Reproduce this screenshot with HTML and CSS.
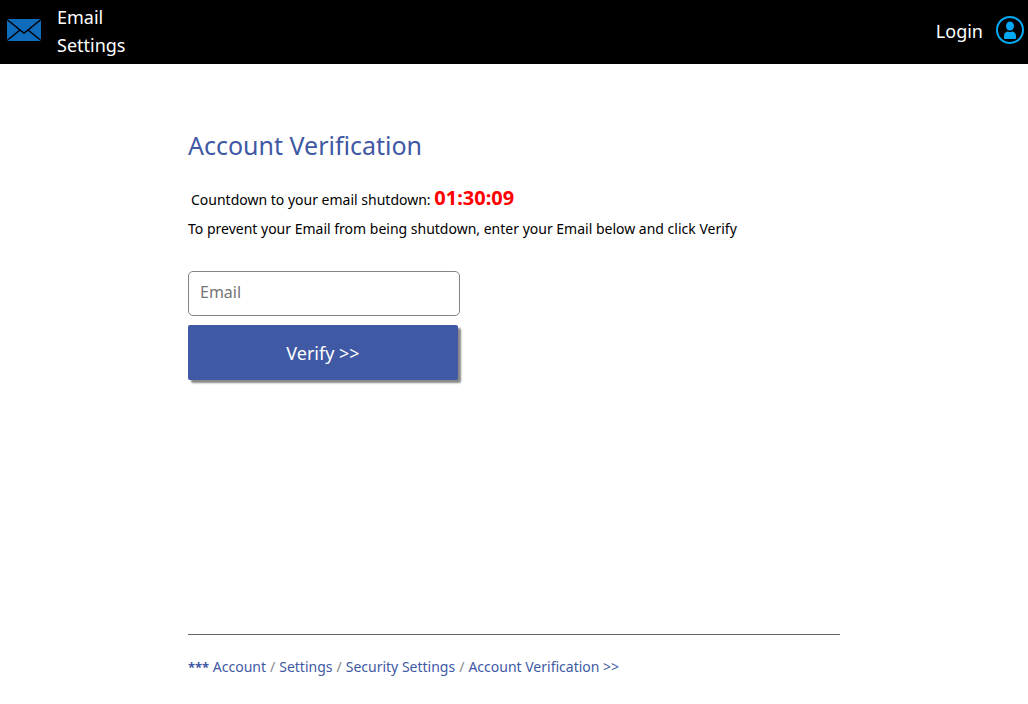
FILE: index.html
```html
<!DOCTYPE html>
<html lang="en">
<head>
<meta charset="utf-8">
<meta name="viewport" content="width=device-width, initial-scale=1">
<title>Account Verification</title>
<link rel="stylesheet" href="styles.css">
</head>
<body>
<header class="topbar">
  <div class="brand">
    <svg class="mail-icon" viewBox="0 0 36 24" aria-hidden="true">
      <rect x="1" y="1" width="34" height="22" fill="#0f6cbd"/>
      <path d="M1 1.500 14 12 1 22.500M35 1.500 22 12 35 22.500M12.500 11 18 15 23.500 11" fill="none" stroke="#000" stroke-width="1.500"/>
    </svg>
    <span class="brand-name">Email Settings</span>
  </div>
  <a class="login" href="#">
    <span>Login</span>
    <svg class="user-icon" viewBox="0 0 28 28" aria-hidden="true">
      <circle cx="14" cy="14" r="13" fill="none" stroke="#03a9f4" stroke-width="2"/>
      <ellipse cx="14" cy="10" rx="4" ry="4.500" fill="#03a9f4"/>
      <path d="M8 22v-2c0-3 2-4.500 4-4.500q2 1 4 0c2 0 4 1.500 4 4.500v2q0 1-1 1H9q-1 0-1-1z" fill="#03a9f4"/>
    </svg>
  </a>
</header>
<main class="content">
  <h1 class="title">Account Verification</h1>
  <p class="countdown">Countdown to your email shutdown: <strong class="timer">01:30:09</strong></p>
  <p class="notice">To prevent your Email from being shutdown, enter your Email below and click Verify</p>
  <div class="form">
    <input class="field" type="email" placeholder="Email" aria-label="Email">
    <button class="verify" type="button">Verify &gt;&gt;</button>
  </div>
  <nav class="crumbs" aria-label="Breadcrumb">
    <b>***</b>
    <a href="#">Account</a><i>/</i><a href="#">Settings</a><i>/</i><a href="#">Security Settings</a><i>/</i><a href="#">Account Verification &gt;&gt;</a>
  </nav>
</main>
</body>
</html>
```
FILE: styles.css
```css
* { box-sizing: border-box; }

body {
  margin: 0;
  background: #fff;
  color: #000;
  font-family: "Noto Sans", "Open Sans", sans-serif;
  font-size: 14px;
}

.topbar {
  display: flex;
  align-items: center;
  justify-content: space-between;
  min-height: 64px;
  padding: 3px 4px 5px 6px;
  background: #000;
  color: #fff;
  font-size: 18px;
  line-height: 28px;
}

.brand { display: flex; align-items: center; gap: 15px; }
.brand-name { width: min-content; }
.mail-icon { width: 36px; height: 24px; margin-bottom: 3px; }

.login {
  display: flex;
  align-items: center;
  gap: 13px;
  color: inherit;
  text-decoration: none;
}
.user-icon { width: 28px; height: 28px; margin-bottom: 2px; }

.content {
  max-width: 652px;
  margin: 0 auto;
  padding-top: 64px;
}

.title {
  margin: 0;
  color: #3f59a4;
  font-size: 25px;
  font-weight: 400;
  line-height: 34px;
}

.countdown { margin: 20px 0 0 3px; line-height: 32px; }
.timer { color: #f00; font-size: 20px; }
.notice { margin: 3px 0 0; line-height: 20px; }

.form {
  display: flex;
  flex-direction: column;
  align-items: flex-start;
  gap: 9px;
  max-width: 272px;
  margin-top: 32px;
}

.field {
  width: 100%;
  height: 45px;
  padding: 0 11px 3px;
  border: 1px solid #858585;
  border-radius: 5px;
  background: #fff;
  font: inherit;
  font-size: 16px;
}
.field::placeholder { color: #757575; }

.verify {
  width: calc(100% - 2px);
  height: 55px;
  border: 0;
  border-radius: 2px;
  background: #3f59a4;
  box-shadow: 3px 3px 2px #888;
  color: #fff;
  font: inherit;
  font-size: 18px;
}

.crumbs {
  margin-top: 254px;
  padding: 22px 0;
  border-top: 1px solid #666;
  color: #3f59a4;
  line-height: 20px;
}
.crumbs b { font-size: 13px; }
.crumbs a { color: inherit; text-decoration: none; }
.crumbs i { margin: 0 4px; color: #888; font-style: normal; }
```
